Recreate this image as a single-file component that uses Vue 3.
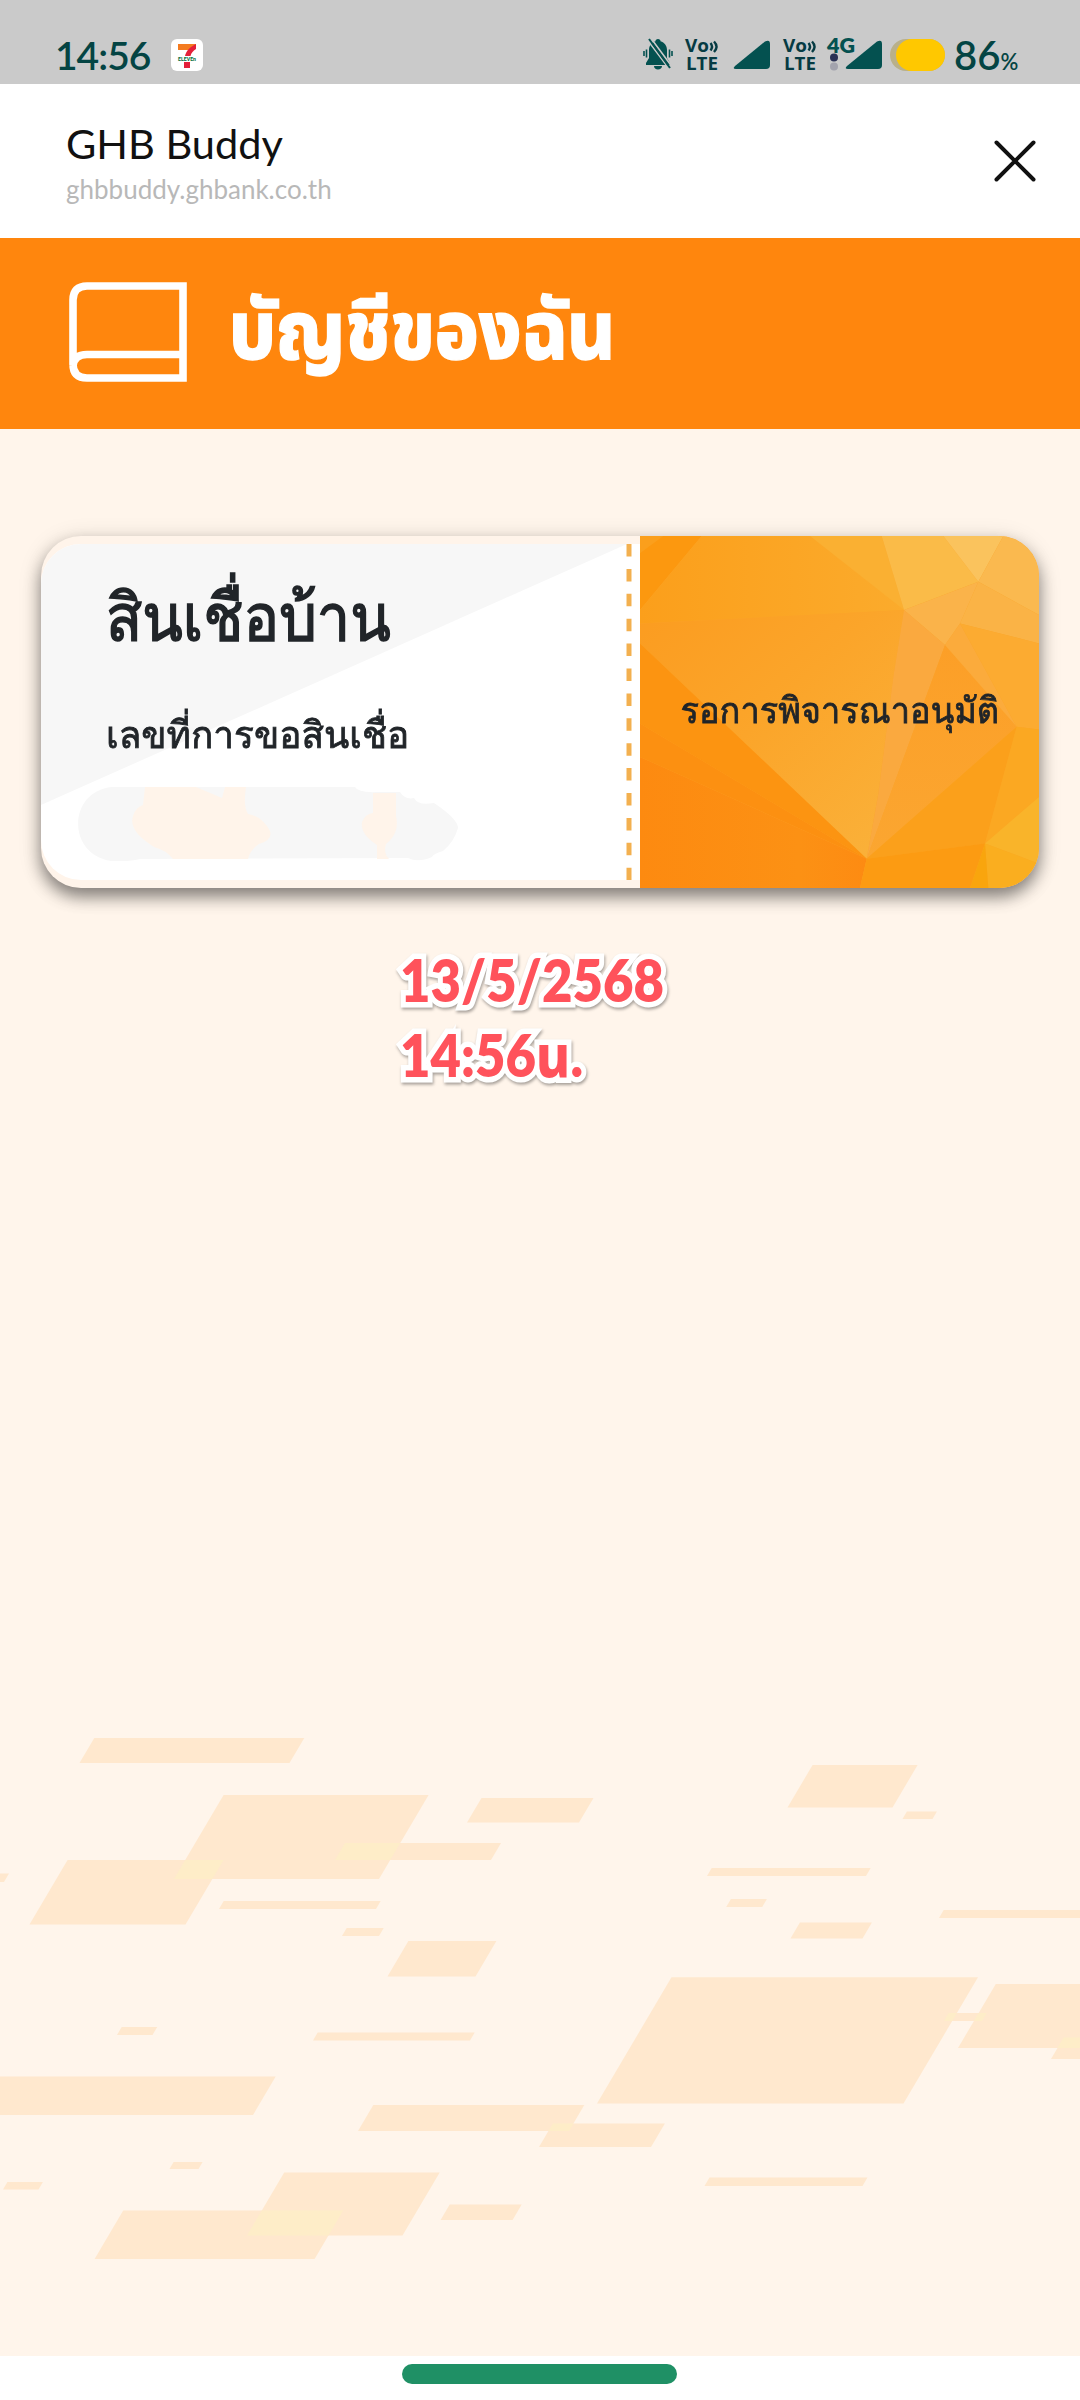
<script setup>
// Each slab: [bottom-left x, width, top y, bottom y], in page pixels
const SLANT = 0.59
const slabs = [
  [79.5, 210, 1738, 1763], [174, 205, 1795, 1879], [29.5, 156, 1860, 1924.5],
  [335, 156, 1843, 1860], [467, 112, 1798, 1822.5], [219, 157, 1901, 1909],
  [342, 37, 1928, 1936], [387.5, 88, 1941, 1976.5], [-29, 33, 1873.5, 1882],
  [787.5, 105, 1765, 1807.5], [902.5, 30, 1811.5, 1819], [707, 159, 1868, 1876],
  [726.2, 36, 1899, 1907], [939, 160, 1910, 1918], [790.5, 72, 1922.5, 1938.5],
  [597, 306.5, 1977.3, 2103.5], [958, 150, 1984, 2048], [944, 38, 2013, 2021],
  [1051, 60, 2037.5, 2059], [704.500, 158, 2177.5, 2186], [117, 35.5, 2027, 2035],
  [313, 157, 2032.5, 2040.5], [-50, 303, 2076.5, 2115], [358, 211, 2105, 2131],
  [539, 112, 2123.5, 2147], [169.5, 29, 2162, 2169], [3, 35.5, 2182, 2189.5],
  [247, 155.5, 2172.5, 2235.5], [94.6, 220, 2210.5, 2259], [440.6, 72, 2204.5, 2220],
]

// Unskewed coordinates turn every slab into a plain rectangle
const rects = slabs.map(([x, w, t, b]) => {
  const u = x + SLANT * b
  return { l: u, r: u + w, t, b }
})
const toPoints = ({ l, r, t, b }) =>
  [[l, t], [r, t], [r, b], [l, b]].map(([u, y]) => `${(u - SLANT * y).toFixed(1)},${y - 429}`).join(' ')

const overlaps = []
rects.forEach((p, i) => {
  rects.slice(i + 1).forEach((q) => {
    const o = { l: Math.max(p.l, q.l), r: Math.min(p.r, q.r), t: Math.max(p.t, q.t), b: Math.min(p.b, q.b) }
    if (o.l < o.r && o.t < o.b) overlaps.push(o)
  })
})

const facets = [
  ['120,78 305,78 120,300', '#fc980f'],
  ['120,78 190,78 120,130', '#fb9f1c'],
  ['305,78 630,78 915,300 120,340 120,300', 'url(#f1)'],
  ['630,78 845,78 912,300', '#fab032'],
  ['845,78 1030,78 1135,215 912,300', '#fabb48'],
  ['1030,78 1210,78 1135,215', '#fac35d'],
  ['1210,78 1317,78 1317,315 1135,215', '#fab94f'],
  ['1135,215 1317,315 1317,400 1080,340', '#fab346'],
  ['912,300 1135,215 1080,340 1035,405', '#fab34a'],
  ['120,340 912,300 880,500 835,850 800,1045 120,400', 'url(#f2)'],
  ['912,300 1035,405 800,1045 835,850 880,500', '#faa93f'],
  ['1035,405 1250,650 800,1045', 'url(#f3)'],
  ['1080,340 1250,650 1035,405', '#fbab3c'],
  ['1080,340 1317,400 1317,658 1250,650', '#fcab31'],
  ['120,400 800,1045 120,640', '#fc9411'],
  ['120,640 800,1045 120,740', '#fc9011'],
  ['120,740 800,1045 780,1133 120,1133', 'url(#f4)'],
  ['1250,650 1155,1000 800,1045', '#fba01b'],
  ['1250,650 1317,658 1317,860 1155,1000', '#fba822'],
  ['1317,860 1317,1060 1155,1000', '#f9b42a'],
  ['1155,1000 1317,1060 1317,1133 1165,1133', '#faae1f'],
  ['800,1045 1155,1000 1110,1133 780,1133', '#fc9b12'],
  ['1155,1000 1165,1133 1110,1133', '#f9a50d'],
]
</script>

<template>
  <div class="screen">
    <header class="status">
      <span class="clock">14:56</span>
      <svg class="app-badge" viewBox="0 0 32 32">
        <rect width="32" height="32" rx="6" fill="#fff" />
        <path d="M7 5h18v1l-6 5H7z" fill="#f47b20" />
        <path d="M25 5v5c-3 2-5 4-5.500 7h-5.500c1-5 5-9 11-12z" fill="#e4203a" />
        <path d="M13 23h6v6h-6z" fill="#e4203a" />
        <text x="16" y="22" text-anchor="middle" textLength="18" lengthAdjust="spacingAndGlyphs" class="eleven">ELEVEn</text>
      </svg>
      <div class="indicators">
        <svg class="bell" viewBox="0 0 30 32">
          <path d="M15 1c1.600 0 2.500 1 2.500 2.200 4 1.200 6.500 4.500 6.500 8.800v8l3 5v2H3v-2l3-5v-8c0-4.300 2.500-7.600 6.500-8.800C12.500 2 13.400 1 15 1zM11 28h8c0 2-1.700 3.500-4 3.500S11 30 11 28z" fill="#045150" />
          <path d="M1 13v5M29 13v5M3.500 11.500v8M26.500 11.500v8" stroke="#045150" stroke-width="1.600" />
          <path d="M4.500 2l21 28M8.500 1l20 27" stroke="#cacaca" stroke-width="1.600" fill="none" />
          <path d="M6 1l21 29" stroke="#045150" stroke-width="2" fill="none" />
        </svg>
        <svg class="volte" viewBox="0 0 34 32">
          <text x="0" y="13" textLength="24" lengthAdjust="spacingAndGlyphs">Vo</text>
          <path d="M25.500 4q3 3.500 0 7.500M29 2.500q5 5 0 10.500" fill="none" stroke="#063b43" stroke-width="2.400" />
          <text x="1" y="31" textLength="32" lengthAdjust="spacingAndGlyphs">LTE</text>
        </svg>
        <svg class="signal" viewBox="0 0 37 32"><path d="M2 27L32 2.500Q37 0 37 5V26Q37 30 33 30H3Q-1 30 2 27z" fill="#045150" /></svg>
        <svg class="volte" viewBox="0 0 34 32">
          <text x="0" y="13" textLength="24" lengthAdjust="spacingAndGlyphs">Vo</text>
          <path d="M25.500 4q3 3.500 0 7.500M29 2.500q5 5 0 10.500" fill="none" stroke="#063b43" stroke-width="2.400" />
          <text x="1" y="31" textLength="32" lengthAdjust="spacingAndGlyphs">LTE</text>
        </svg>
        <svg class="signal4g" viewBox="0 0 55 34">
          <path d="M20 29L50 4.500Q55 2 55 7V28Q55 32 51 32H21Q17 32 20 29z" fill="#045150" />
          <text x="0" y="16" textLength="28" lengthAdjust="spacingAndGlyphs">4G</text>
          <circle cx="7" cy="20.500" r="4" fill="#2b3155" />
          <circle cx="7" cy="29.500" r="4" fill="#a3a3ad" />
        </svg>
        <span class="battery"><i></i></span>
        <span class="percent">86<small>%</small></span>
      </div>
    </header>

    <div class="browser-bar">
      <div class="site">
        <div class="site-name">GHB Buddy</div>
        <div class="site-url">ghbbuddy.ghbank.co.th</div>
      </div>
      <svg class="close" viewBox="0 0 42 42"><path d="M2.500 2.500l37 37M39.500 2.500l-37 37" stroke="#111" stroke-width="4" stroke-linecap="round" /></svg>
    </div>

    <div class="title-bar">
      <svg class="book" viewBox="0 0 118 100">
        <path d="M114 4H18Q4 4 4 18V82Q4 96 18 96H114zM4 84Q5 72.500 18 72.500H114" fill="none" stroke="#fff" stroke-width="7.600" />
      </svg>
      <h1>บัญชีของฉัน</h1>
    </div>

    <main>
      <svg class="pattern" viewBox="0 0 1080 1927">
        <polygon v-for="(r, i) in rects" :key="'s' + i" :points="toPoints(r)" fill="#ffe8ce" />
        <polygon v-for="(r, i) in overlaps" :key="'o' + i" :points="toPoints(r)" fill="#feedc8" />
      </svg>

      <section class="card">
        <div class="loan">
          <svg class="loan-bg" viewBox="0 0 599 336" preserveAspectRatio="none">
            <rect width="599" height="336" fill="#fff" />
            <path d="M0 0H586L0 261z" fill="#f7f7f7" />
            <path d="M588 0V336" stroke="#f3b04f" stroke-width="5" stroke-dasharray="12.500 12.400" />
          </svg>
          <div class="loan-text">
            <h2>สินเชื่อบ้าน</h2>
            <p>เลขที่การขอสินเชื่อ</p>
            <svg class="mask" viewBox="0 0 380 75">
              <path d="M34 1H277Q280 7 300 6H322Q327 14 336 12Q340 20 356 17Q380 33 380 42Q376 56 365 65Q355 68 354 71Q340 77 330 72L62 73Q50 76 33 75C-12 68-10 5 34 1z" fill="#f7f7f7" />
              <path d="M67 1H118L144 12L147 1H168Q165 20 170 28Q184 30 192 45Q195 54 181 58Q172 64 170 73H95Q88 64 76 61Q50 45 55 30Q57 22 65 19z" fill="#fff4ea" />
              <path d="M295 7H318V30Q322 47 308 58Q305 67 311 73H299V59Q282 48 284 36Q287 28 295 27z" fill="#fff4ea" />
            </svg>
          </div>
        </div>
        <div class="status-side">
          <svg class="facets" viewBox="120 78 1197 1055" preserveAspectRatio="none">
            <defs>
              <linearGradient id="f1" x1="0" x2="1"><stop offset="0" stop-color="#fb9f1b" /><stop offset="1" stop-color="#fbab2c" /></linearGradient>
              <linearGradient id="f2" x1="0" y1="0" x2="1" y2="1"><stop offset="0" stop-color="#fb9c20" /><stop offset=".45" stop-color="#fba52a" /><stop offset="1" stop-color="#fab23b" /></linearGradient>
              <linearGradient id="f3" x1="0" x2="0" y1="0" y2="1"><stop offset="0" stop-color="#fc9f27" /><stop offset="1" stop-color="#fba631" /></linearGradient>
              <linearGradient id="f4" x1="0" x2="1"><stop offset="0" stop-color="#fd8a10" /><stop offset=".7" stop-color="#fc9114" /><stop offset="1" stop-color="#fd8b12" /></linearGradient>
            </defs>
            <rect x="120" y="78" width="1197" height="1055" fill="#fba428" />
            <polygon v-for="([points, fill], i) in facets" :key="i" :points="points" :fill="fill" />
          </svg>
          <span class="state">รอการพิจารณาอนุมัติ</span>
        </div>
      </section>

      <div class="stamp">
        <div>13/5/2568</div>
        <div class="time">14:56น.</div>
      </div>
    </main>

    <footer><i class="pill"></i></footer>
  </div>
</template>

<style>
body { background: #fff; }
</style>

<style scoped>
.screen {
  width: 1080px;
  height: 2400px;
  overflow: hidden;
  display: flex;
  flex-direction: column;
  font-family: Lato, "Noto Sans Thai", "Liberation Sans", sans-serif;
}
.status {
  height: 84px;
  flex: none;
  box-sizing: border-box;
  padding: 38px 61px 0 55px;
  background: #cacaca;
  display: flex;
  align-items: flex-start;
}
.clock { width: 116px; font-size: 39px; line-height: 34px; font-weight: 600; letter-spacing: -1px; color: #044443; }
.app-badge { width: 32px; height: 32px; margin-top: 1px; }
.eleven { font: 700 6px Roboto, sans-serif; fill: #00703c; }
.indicators { margin-left: auto; display: flex; align-items: flex-start; }
.indicators svg { overflow: visible; }
.bell { width: 30px; height: 32px; }
.volte { width: 34px; height: 32px; margin: 1px 0 0 12px; fill: #063b43; font: 700 17.500px "Open Sans", sans-serif; }
.signal { width: 37px; height: 32px; margin: 1px 0 0 14px; }
.signal4g { width: 55px; height: 34px; margin: -1px 0 0 10px; font: 800 21px Lato, sans-serif; fill: #045150; }
.signal + .volte { margin-left: 13px; }
.battery { width: 55px; height: 32px; margin: 1px 0 0 8px; border-radius: 16px; background: #b9b08a; display: flex; justify-content: flex-end; }
.battery i { width: 49px; border-radius: 16px; background: #ffc800; }
.percent { width: 65px; margin-left: 9px; font-size: 40px; line-height: 34px; font-weight: 600; color: #044443; white-space: nowrap; }
.percent small { font-size: 22px; }

.browser-bar {
  height: 154px;
  flex: none;
  box-sizing: border-box;
  padding: 28px 44px 0 66px;
  display: flex;
  justify-content: space-between;
}
.site-name { font-size: 41.500px; line-height: 62px; color: #111; }
.site-url { font-size: 26px; line-height: 30px; color: #b8b8b8; }
.close { width: 42px; height: 42px; margin-top: 28px; }

.title-bar {
  height: 191px;
  flex: none;
  box-sizing: border-box;
  background: #ff860d;
  display: flex;
  align-items: flex-start;
  padding: 44px 0 0 69px;
}
.book { width: 118px; height: 100px; }
h1 {
  margin: -10px 0 0 42px;
  font-size: 82px;
  line-height: 110px;
  font-weight: 800;
  color: #fff;
  white-space: nowrap;
  -webkit-text-stroke: 1.500px #fff;
  transform: scaleX(.895);
  transform-origin: left;
}

main { position: relative; height: 1927px; flex: none; box-sizing: border-box; padding: 107px 41px 0; background: #fff5eb; }
.pattern { position: absolute; inset: 0; width: 1080px; height: 1927px; }
.card {
  position: relative;
  width: 998px;
  height: 352px;
  display: flex;
  border-radius: 40px;
  overflow: hidden;
  background: #fff4ea;
  font-family: Loma, Garuda, "Noto Sans Thai", sans-serif;
  box-shadow: 0 9px 16px rgba(0, 0, 0, .42), 0 4px 24px rgba(0, 0, 0, .14);
}
.loan { position: relative; width: 599px; height: 352px; }
.loan-bg { position: absolute; left: 0; top: 8px; width: 599px; height: 336px; border-radius: 40px 0 0 40px; }
.loan-text { position: relative; padding: 34px 0 0 37px; color: #212529; }
h2, p { transform-origin: left; white-space: nowrap; font-weight: 400; }
h2 { margin: 0 0 0 28px; font-size: 66px; line-height: 96px; transform: scaleX(.9); -webkit-text-stroke: 1.600px #212529; }
p { margin: 39px 0 0 28px; font-size: 38px; line-height: 60px; transform: scaleX(.973); -webkit-text-stroke: .8px #212529; }
.mask { display: block; width: 380px; height: 75px; margin-top: 21px; }
.status-side { position: relative; width: 399px; height: 352px; display: flex; align-items: center; justify-content: center; }
.facets { position: absolute; inset: 0; width: 100%; height: 100%; }
.state { position: relative; margin-top: -3px; font-size: 36px; color: #212529; white-space: nowrap; transform: scaleX(.955); -webkit-text-stroke: .8px #212529; }

.stamp {
  position: relative;
  margin: 54px 0 0 359px;
  font-size: 59px;
  line-height: 75px;
  font-weight: 800;
  color: #ff525b;
  -webkit-text-stroke: 11px #fff;
  paint-order: stroke fill;
  filter: drop-shadow(1px 2px 1.500px rgba(0, 0, 0, .35));
  white-space: nowrap;
  transform: scaleX(.892);
  transform-origin: left;
}

footer { flex: 1; display: flex; justify-content: center; align-items: flex-start; }
.pill { width: 275px; height: 20px; margin: 8px 1px 0 0; border-radius: 10px; background: #1f9065; }
</style>
